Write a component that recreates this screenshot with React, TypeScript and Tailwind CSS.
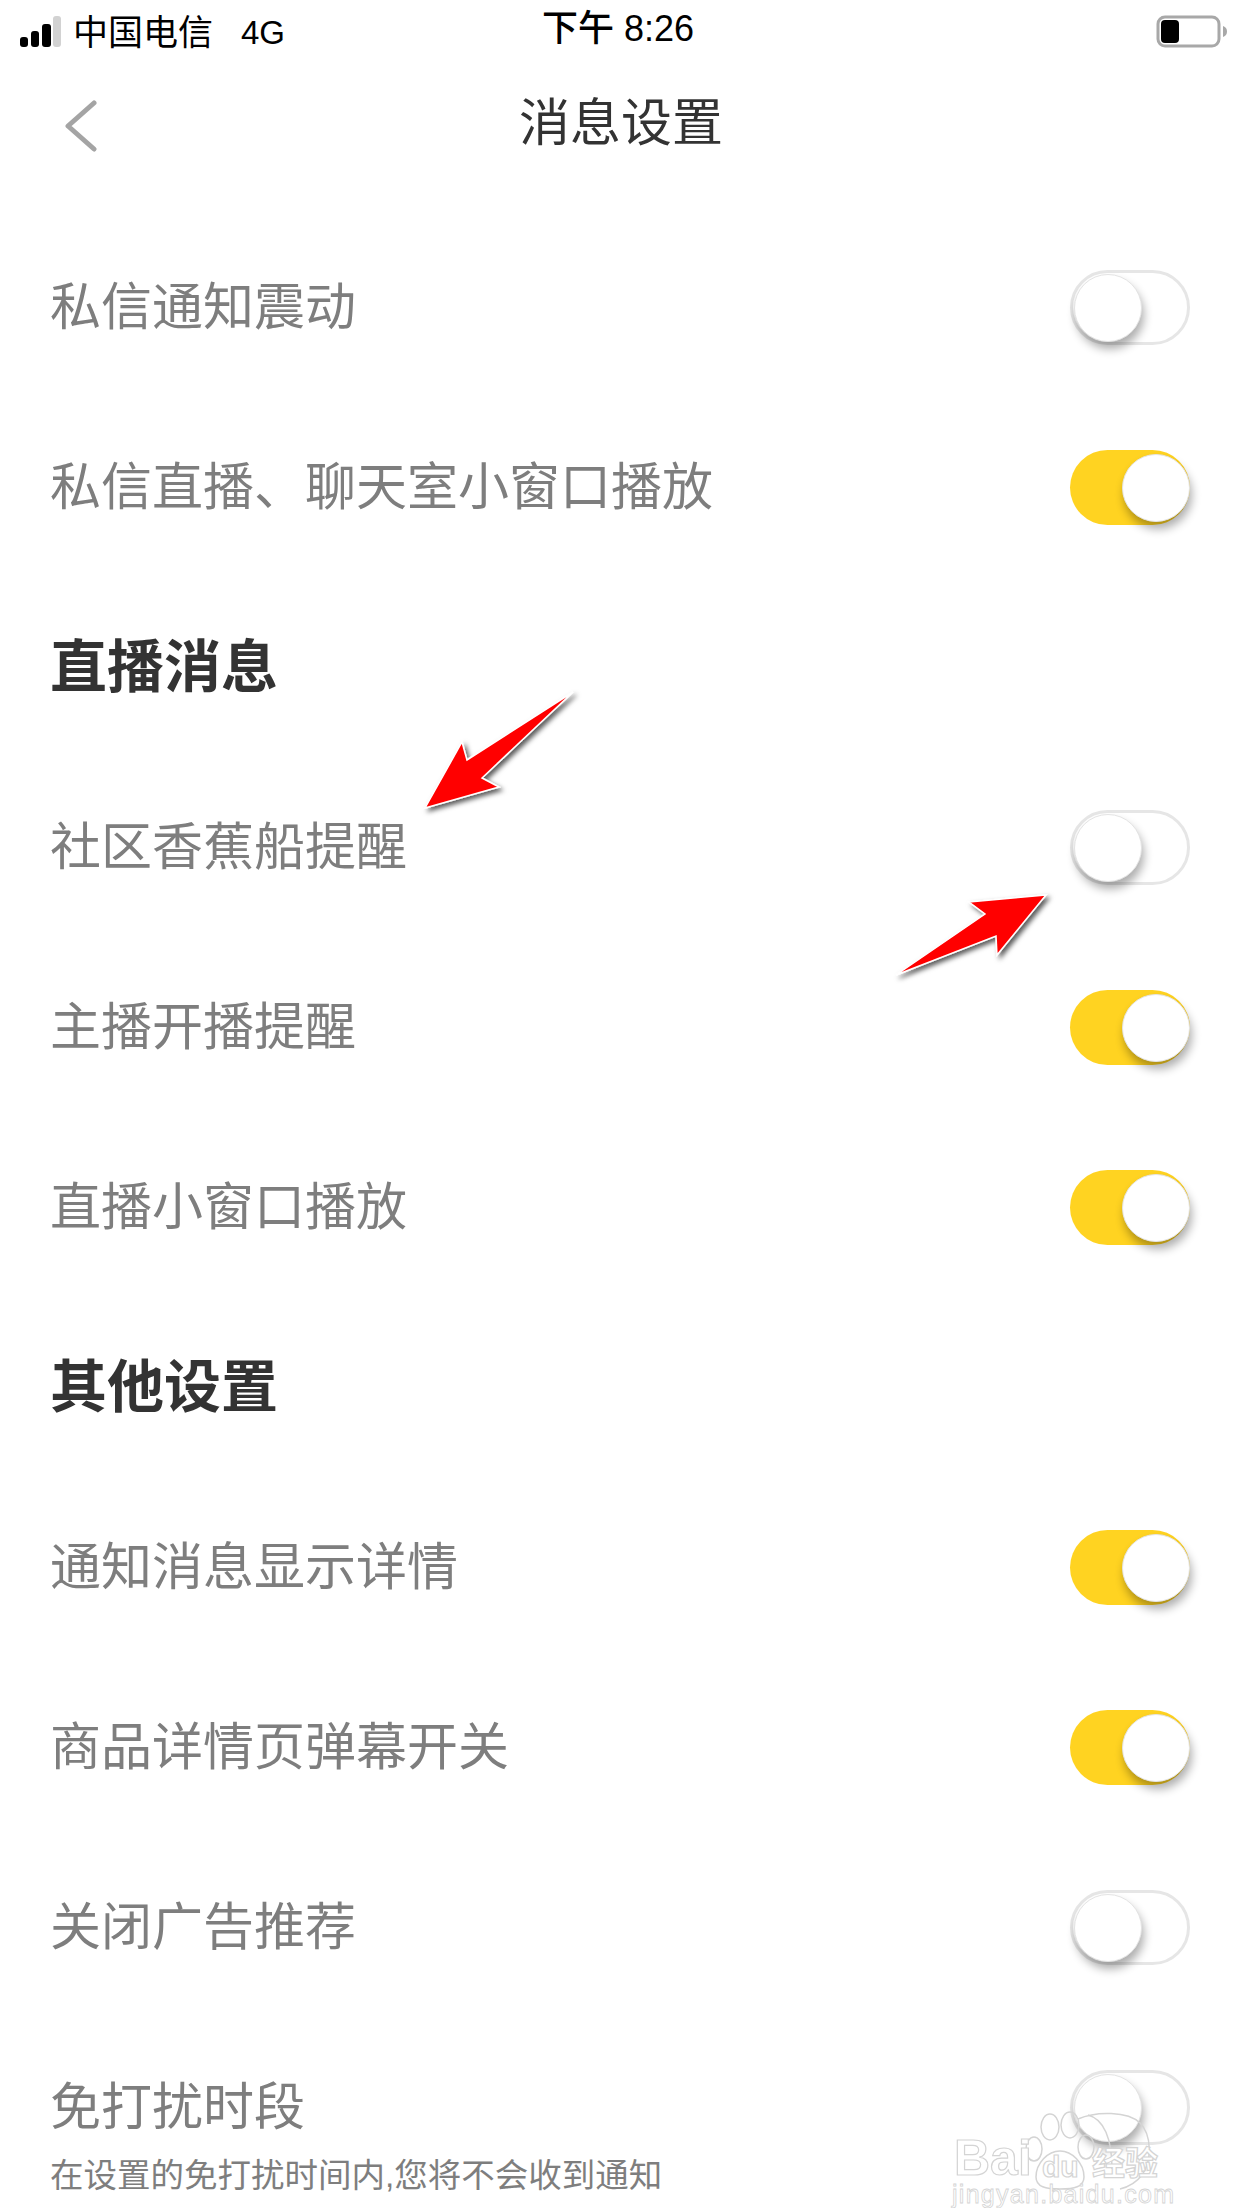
import React from "react";

const cjk = { fontFamily: '"Liberation Sans", "Noto Sans CJK SC", sans-serif' };

function Toggle({ on }: { on: boolean }) {
  return (
    <div
      className={
        on
          ? "relative h-[75px] w-[120px] rounded-full bg-[#ffd321]"
          : "relative h-[75px] w-[120px] rounded-full border-[3px] border-[#e6e6e6] bg-white"
      }
    >
      <div
        className={
          on
            ? "absolute right-0 top-[4px] h-[68px] w-[68px] rounded-full border border-[#e4e4e4] bg-white shadow-[2px_7px_10px_rgba(0,0,0,0.32)]"
            : "absolute left-[1px] top-[1px] h-[68px] w-[68px] rounded-full border border-[#e4e4e4] bg-white shadow-[2px_7px_10px_rgba(0,0,0,0.32)]"
        }
      />
    </div>
  );
}

function Row({ label, on, sub }: { label: string; on: boolean; sub?: string }) {
  return (
    <div className="relative flex h-[180px] items-center justify-between pl-[50px] pr-[52px]">
      <span className="text-[51px] leading-none text-[#7e7e7e]">{label}</span>
      <Toggle on={on} />
      {sub && (
        <span className="absolute left-[50px] top-[142px] text-[33.5px] leading-none text-[#7e7e7e]">
          {sub}
        </span>
      )}
    </div>
  );
}

function Heading({ children }: { children: string }) {
  return (
    <div className="flex h-[180px] items-center pl-[50px]">
      <span className="text-[57px] font-bold leading-none text-[#333333]">{children}</span>
    </div>
  );
}

function StatusBar() {
  return (
    <div className="relative flex h-[62px] items-center justify-between pl-[20px] pr-[14px] pt-[2px]">
      <div className="flex items-center">
        <svg width="52" height="32" viewBox="0 0 52 32">
          <rect x="0" y="21" width="8" height="10" rx="3" fill="#000" />
          <rect x="11" y="15" width="8" height="16" rx="3" fill="#000" />
          <rect x="22" y="8" width="9" height="23" rx="3" fill="#000" />
          <rect x="33" y="0" width="8" height="31" rx="3" fill="#d2d2d2" />
        </svg>
        <span className="ml-[1px] text-[35px] leading-none text-black">中国电信</span>
        <span className="ml-[28px] text-[33px] leading-none text-black">4G</span>
      </div>
      <div className="absolute left-[542px] top-[11px] text-[36px] font-medium leading-none text-black">
        下午 8:26
      </div>
      <svg width="72" height="34" viewBox="0 0 72 34">
        <rect x="2" y="2" width="61" height="29" rx="7" fill="#fff" stroke="#a8a8a8" strokeWidth="3" />
        <rect x="5" y="5" width="18" height="23" rx="4" fill="#000" />
        <path d="M67 11c3 1 4 3 4 5.500s-1 4.500-4 5.500z" fill="#a8a8a8" />
      </svg>
    </div>
  );
}

function NavBar() {
  return (
    <div className="relative flex h-[128px] items-center justify-center pb-[6px]">
      <svg
        className="absolute left-[62px] top-[38px]"
        width="36"
        height="52"
        viewBox="0 0 36 52"
        fill="none"
        stroke="#a4a4a4"
        strokeWidth="5"
        strokeLinecap="round"
        strokeLinejoin="round"
      >
        <path d="M32 3 6 26l26 23" transform="translate(0 0)" />
      </svg>
      <span className="text-[51px] leading-none text-[#333333]">消息设置</span>
    </div>
  );
}

function Arrows() {
  return (
    <svg className="pointer-events-none absolute left-0 top-0" width="1242" height="2208" viewBox="0 0 1242 2208">
      <defs>
        <filter id="arrowShadow" x="-20%" y="-20%" width="150%" height="150%">
          <feDropShadow dx="3" dy="3" stdDeviation="2.500" floodColor="#000" floodOpacity="0.65" />
        </filter>
      </defs>
      <polygon
        points="425,808 462,742 467,760 573,692 482,778 499,787"
        fill="#ff0000"
        stroke="#fff"
        strokeWidth="1.500"
        filter="url(#arrowShadow)"
      />
      <polygon
        points="896,975 996,936 997,955 1046,895 969,902 985,914"
        fill="#ff0000"
        stroke="#fff"
        strokeWidth="1.500"
        filter="url(#arrowShadow)"
      />
    </svg>
  );
}

function Watermark() {
  const stroke = "#d4d4d4";
  return (
    <svg className="pointer-events-none absolute left-[950px] top-[2105px]" width="240" height="103" viewBox="0 0 240 103">
      <g fill="none" stroke={stroke} strokeWidth="1.500">
        <path d="M128 14c18-8 50-8 62 4 12 12 12 38 2 52-6 8-14 12-22 14" />
        <path d="M138 10c16 4 24 24 24 54" />
        <ellipse cx="100" cy="22" rx="9" ry="13" />
        <ellipse cx="120" cy="20" rx="9" ry="13" />
        <ellipse cx="84" cy="44" rx="8" ry="12" />
        <ellipse cx="136" cy="42" rx="8" ry="12" />
        <path d="M86 72c0-14 12-26 24-26s24 12 24 26c0 10-10 12-24 12s-24-2-24-12z" />
      </g>
      <g style={{ fontFamily: '"Liberation Sans", "Noto Sans CJK SC", sans-serif' }} fill="#fff" stroke={stroke} strokeWidth="1.200">
        <text x="4" y="70" fontSize="50" fontWeight="700">Bai</text>
        <text x="92" y="72" fontSize="30" fontWeight="700">du</text>
        <text x="142" y="70" fontSize="33" fontWeight="700">经验</text>
        <text x="2" y="98" fontSize="25" fill="#fff" strokeWidth="0.800" textLength="222">jingyan.baidu.com</text>
      </g>
    </svg>
  );
}

export default function App() {
  return (
    <div className="relative h-[2208px] w-[1242px] overflow-hidden bg-white" style={cjk}>
      <StatusBar />
      <NavBar />
      <div className="h-[27px]" />
      <Row label="私信通知震动" on={false} />
      <Row label="私信直播、聊天室小窗口播放" on />
      <Heading>直播消息</Heading>
      <Row label="社区香蕉船提醒" on={false} />
      <Row label="主播开播提醒" on />
      <Row label="直播小窗口播放" on />
      <Heading>其他设置</Heading>
      <Row label="通知消息显示详情" on />
      <Row label="商品详情页弹幕开关" on />
      <Row label="关闭广告推荐" on={false} />
      <Row label="免打扰时段" on={false} sub="在设置的免打扰时间内,您将不会收到通知" />
      <Arrows />
      <Watermark />
    </div>
  );
}
